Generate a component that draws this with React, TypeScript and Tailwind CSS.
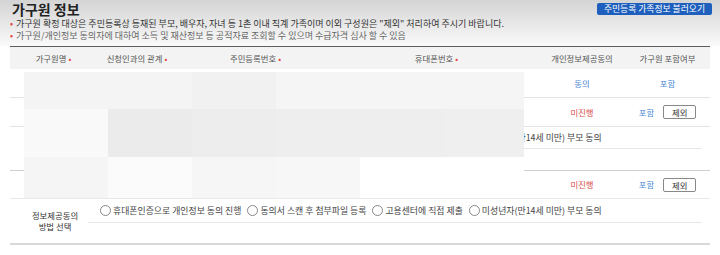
import React from 'react';

const headers = [
  { label: '가구원명', req: true },
  { label: '신청인과의 관계', req: true },
  { label: '주민등록번호', req: true },
  { label: '휴대폰번호', req: true },
  { label: '개인정보제공동의', req: false },
  { label: '가구원 포함여부', req: false },
];

const consentOptions = [
  '휴대폰인증으로 개인정보 동의 진행',
  '동의서 스캔 후 첨부파일 등록',
  '고용센터에 직접 제출',
  '미성년자(만14세 미만) 부모 동의',
];

// 가려진 영역 (마스킹 블록 색상)
const maskShades = [
  ['bg-[#f4f4f4]', 'bg-[#f4f4f4]', 'bg-[#f1f1f1]', 'bg-[#f5f5f5]', 'bg-[#f5f5f5]', 'bg-[#f5f5f5]'],
  ['bg-[#f9f9f9]', 'bg-[#ebebeb]', 'bg-[#ededed]', 'bg-[#eeeeee]', 'bg-[#eeeeee]', 'bg-[#efefef]'],
  ['bg-[#f5f5f5]', 'bg-[#fbfbfb]', 'bg-[#f6f6f6]', 'bg-[#f7f7f7]', 'bg-white', 'bg-white'],
];

const gridCols = 'grid grid-cols-[87px_80px_157px_205px_86px_85px]';

const ConsentRow: React.FC<{ optionsH: string; emptyH: string; bottom: string }> = ({ optionsH, emptyH, bottom }) => (
  <div className={`flex ${bottom}`}>
    <div className="w-[78px] pl-[12px] flex flex-col items-center justify-center text-[#333] leading-[11px]">
      <span>정보제공동의</span>
      <span>방법 선택</span>
    </div>
    <div className="flex-1 flex flex-col pr-[8px]">
      <div className={`${optionsH} flex items-center gap-[6px] pl-[12px] border-b border-[#e6e6e6] text-[#444] text-[8.9px]`}>
        {consentOptions.map((opt) => (
          <label key={opt} className="flex items-center gap-[2px] whitespace-nowrap">
            <span className="w-[11px] h-[11px] rounded-full border border-[#888] bg-white" />
            <span>{opt}</span>
          </label>
        ))}
      </div>
      <div className={emptyH} />
    </div>
  </div>
);

const MemberRow: React.FC<{ consent: 'done' | 'pending'; exclude: boolean; h: string; border: string }> = ({ consent, exclude, h, border }) => (
  <div className={`${gridCols} ${h} ${border} items-center`}>
    <div />
    <div />
    <div />
    <div />
    <div className="text-center">
      {consent === 'done' ? (
        <span className="text-[#4a86d4]">동의</span>
      ) : (
        <span className="text-[#d9504f]">미진행</span>
      )}
    </div>
    <div className="flex items-center justify-center gap-[9px]">
      <span className="text-[#4a86d4]">포함</span>
      {exclude && (
        <button className="w-[33px] h-[14px] border border-[#888] rounded-[2px] bg-white text-[#333] leading-[12px]">
          제외
        </button>
      )}
    </div>
  </div>
);

export default function App() {
  return (
    <div className="relative w-[720px] h-[255px] overflow-hidden bg-white font-['Noto_Sans_CJK_KR',sans-serif] text-[8.4px]">
      {/* Top section */}
      <div className="h-[46px] px-[10px] bg-linear-to-b from-[#d4d4d4] to-[#fafafa]">
        <div className="flex items-start justify-between">
          <h2 className="text-[14px] font-bold leading-[16px] text-[#222] pl-[2px] pt-[1px]">가구원 정보</h2>
          <button className="mt-[3px] mr-[-2px] h-[12px] px-[7px] rounded-[2px] bg-[#1e5fbd] text-white text-[8.8px] leading-[12px]">
            주민등록 가족정보 불러오기
          </button>
        </div>
        <div className="mt-[1px] leading-[12px] text-[9px]">
          <p className="text-[#333]">
            <span className="text-[#e0443f] mr-[3px]">•</span>
            가구원 확정 대상은 주민등록상 등재된 부모, 배우자, 자녀 등 1촌 이내 직계 가족이며 이외 구성원은 "제외" 처리하여 주시기 바랍니다.
          </p>
          <p className="text-[#666]">
            <span className="text-[#e0443f] mr-[3px]">•</span>
            가구원/개인정보 동의자에 대하여 소득 및 재산정보 등 공적자료 조회할 수 있으며 수급자격 심사 할 수 있음
          </p>
        </div>
      </div>

      {/* Table */}
      <div className="mx-[10px] border-t border-[#5e5e5e]">
        <div className={`${gridCols} h-[22px] items-center bg-[#f3f3f3] text-[#555]`}>
          {headers.map((h) => (
            <div key={h.label} className="text-center whitespace-nowrap">
              {h.label}
              {h.req && <span className="text-[#e0443f] ml-[2px]">•</span>}
            </div>
          ))}
        </div>

        <MemberRow consent="done" exclude={false} h="h-[29px]" border="border-b border-[#e4e4e4]" />
        <MemberRow consent="pending" exclude={true} h="h-[29px]" border="border-b border-[#e4e4e4]" />
        <ConsentRow optionsH="h-[22px]" emptyH="h-[21px]" bottom="border-b border-[#cfcfcf]" />
        <MemberRow consent="pending" exclude={true} h="h-[28px]" border="border-b border-[#e8e8e8]" />
        <ConsentRow optionsH="h-[24px]" emptyH="h-[20px]" bottom="border-b-2 border-[#d8d8d8]" />
      </div>

      {/* Masked personal info */}
      <div className="absolute left-[24px] top-[72px] grid grid-cols-[84px_84px_84px_84px_83px_81px] grid-rows-[37px_48px_41px]">
        {maskShades.flat().map((c, i) => (
          <div key={i} className={c} />
        ))}
      </div>
    </div>
  );
}
